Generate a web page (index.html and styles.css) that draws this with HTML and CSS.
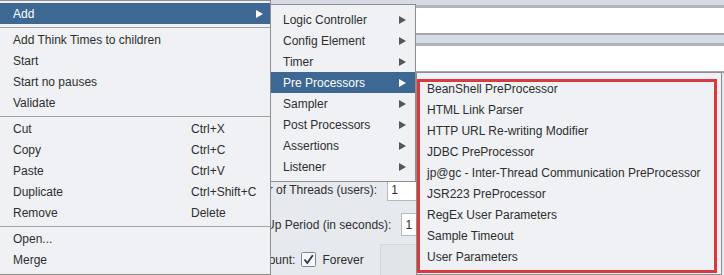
FILE: index.html
```html
<!DOCTYPE html>
<html lang="en">
<head>
  <meta charset="UTF-8">
  <title>Test Plan - Add menu</title>
  <link rel="stylesheet" href="styles.css">
</head>
<body>
  <!-- editor behind the popup menus -->
  <div class="editor">
    <div class="strip"></div>
    <div class="field"></div>
    <div class="strip gap"></div>
    <div class="field"></div>

    <div class="props">
      <div class="prop-row">
        <span class="label">Number of Threads (users):</span>
        <span class="input">1</span>
      </div>
      <div class="prop-row">
        <span class="label">Ramp-Up Period (in seconds):</span>
        <span class="input">1</span>
      </div>
      <div class="prop-row">
        <span class="label">Loop Count:</span>
        <svg class="check" width="15" height="15" viewBox="0 0 15 15">
          <rect x="0.5" y="0.5" width="14" height="14" rx="1" fill="#f6f8fb" stroke="#7d8794"/>
          <path d="M3.5 7.5 L6.3 11 L11.8 3.2" fill="none" stroke="#25384f" stroke-width="1.8"/>
        </svg>
        <span class="check-label">Forever</span>
        <span class="input disabled"></span>
      </div>
    </div>
  </div>

  <!-- context menu -->
  <div class="menu main-menu">
    <div class="item active">Add<span class="arrow"></span></div>
    <div class="sep"></div>
    <div class="item">Add Think Times to children</div>
    <div class="item">Start</div>
    <div class="item">Start no pauses</div>
    <div class="item">Validate</div>
    <div class="sep"></div>
    <div class="item"><span class="name">Cut</span><span>Ctrl+X</span></div>
    <div class="item"><span class="name">Copy</span><span>Ctrl+C</span></div>
    <div class="item"><span class="name">Paste</span><span>Ctrl+V</span></div>
    <div class="item"><span class="name">Duplicate</span><span>Ctrl+Shift+C</span></div>
    <div class="item"><span class="name">Remove</span><span>Delete</span></div>
    <div class="sep"></div>
    <div class="item">Open...</div>
    <div class="item">Merge</div>
  </div>

  <div class="menu add-menu">
    <div class="item">Logic Controller<span class="arrow"></span></div>
    <div class="item">Config Element<span class="arrow"></span></div>
    <div class="item">Timer<span class="arrow"></span></div>
    <div class="item active">Pre Processors<span class="arrow"></span></div>
    <div class="item">Sampler<span class="arrow"></span></div>
    <div class="item">Post Processors<span class="arrow"></span></div>
    <div class="item">Assertions<span class="arrow"></span></div>
    <div class="item">Listener<span class="arrow"></span></div>
  </div>

  <div class="menu pre-menu">
    <div class="item">BeanShell PreProcessor</div>
    <div class="item">HTML Link Parser</div>
    <div class="item">HTTP URL Re-writing Modifier</div>
    <div class="item">JDBC PreProcessor</div>
    <div class="item">jp@gc - Inter-Thread Communication PreProcessor</div>
    <div class="item">JSR223 PreProcessor</div>
    <div class="item">RegEx User Parameters</div>
    <div class="item">Sample Timeout</div>
    <div class="item">User Parameters</div>
  </div>

  <!-- red annotation box -->
  <div class="mark"></div>
</body>
</html>
```

FILE: styles.css
```css
body {
  margin: 0;
  position: relative;
  width: 724px;
  height: 275px;
  overflow: hidden;
  font-family: "Liberation Sans", Arial, sans-serif;
  font-size: 12px;
  color: #2e2e2e;
  background-color: #e6e9ee;
}

/* editor */
.strip {
  height: 5px;
  background-color: #d6dbe3;
}

.strip.gap {
  height: 8px;
}

.field {
  height: 25px;
  background-color: #ffffff;
  border-top: 3px solid #b1b4b9;
  border-bottom: 2px solid #a4a8ae;
}

/* left part of the panel sits under the context menu */
.props {
  display: flex;
  flex-direction: column;
  gap: 12px;
  height: 100px;
  margin-left: 271px;
  padding-top: 105px;
  overflow: hidden;
}

.prop-row {
  display: flex;
  align-items: center;
  gap: 10px;
  height: 23px;
  margin-left: -41px;
}

.input {
  display: flex;
  align-items: center;
  width: 60px;
  height: 21px;
  padding-left: 3px;
  background-color: #ffffff;
  border: 1px solid #b4bac3;
}

.input.disabled {
  height: 30px;
  margin-left: 6px;
  background-color: #e1e4e8;
  border-color: #d4d8dd;
}

.check {
  margin-left: -4px;
}

.check-label {
  margin-left: -4px;
}

/* popup menus */
.menu {
  position: absolute;
  box-sizing: border-box;
  background-color: #eff1f4;
  border: 1px solid #8e8e8e;
}

.main-menu {
  left: -1px;
  top: 0;
  width: 272px;
  height: 275px;
  padding: 2px 0;
}

.add-menu {
  left: 270px;
  top: 4px;
  width: 146px;
  padding: 4px 0;
}

.pre-menu {
  left: 416px;
  top: 72px;
  width: 306px;
  height: 203px;
  padding: 5px 0 0;
}

.item {
  display: flex;
  align-items: center;
  height: 21px;
  padding-left: 13px;
  white-space: nowrap;
}

.add-menu .item {
  padding-left: 12px;
}

.pre-menu .item {
  padding-left: 10px;
}

.item .name {
  width: 178px;
}

.item.active {
  background-color: #3c6893;
  color: #ffffff;
}

.arrow {
  margin-left: auto;
  margin-right: 7px;
  width: 0;
  height: 0;
  border-left: 7px solid #575757;
  border-top: 4px solid transparent;
  border-bottom: 4px solid transparent;
}

.add-menu .arrow {
  margin-right: 9px;
}

.item.active .arrow {
  border-left-color: #ffffff;
}

.sep {
  height: 5px;
  display: flex;
  flex-direction: column;
  justify-content: center;
}

.sep::before {
  content: "";
  height: 1px;
  margin-top: 1px;
  background-color: #a3a3a3;
}

.mark {
  position: absolute;
  left: 417px;
  top: 79px;
  width: 300px;
  height: 194px;
  box-sizing: border-box;
  border: 3px solid #d83a3d;
}
```
